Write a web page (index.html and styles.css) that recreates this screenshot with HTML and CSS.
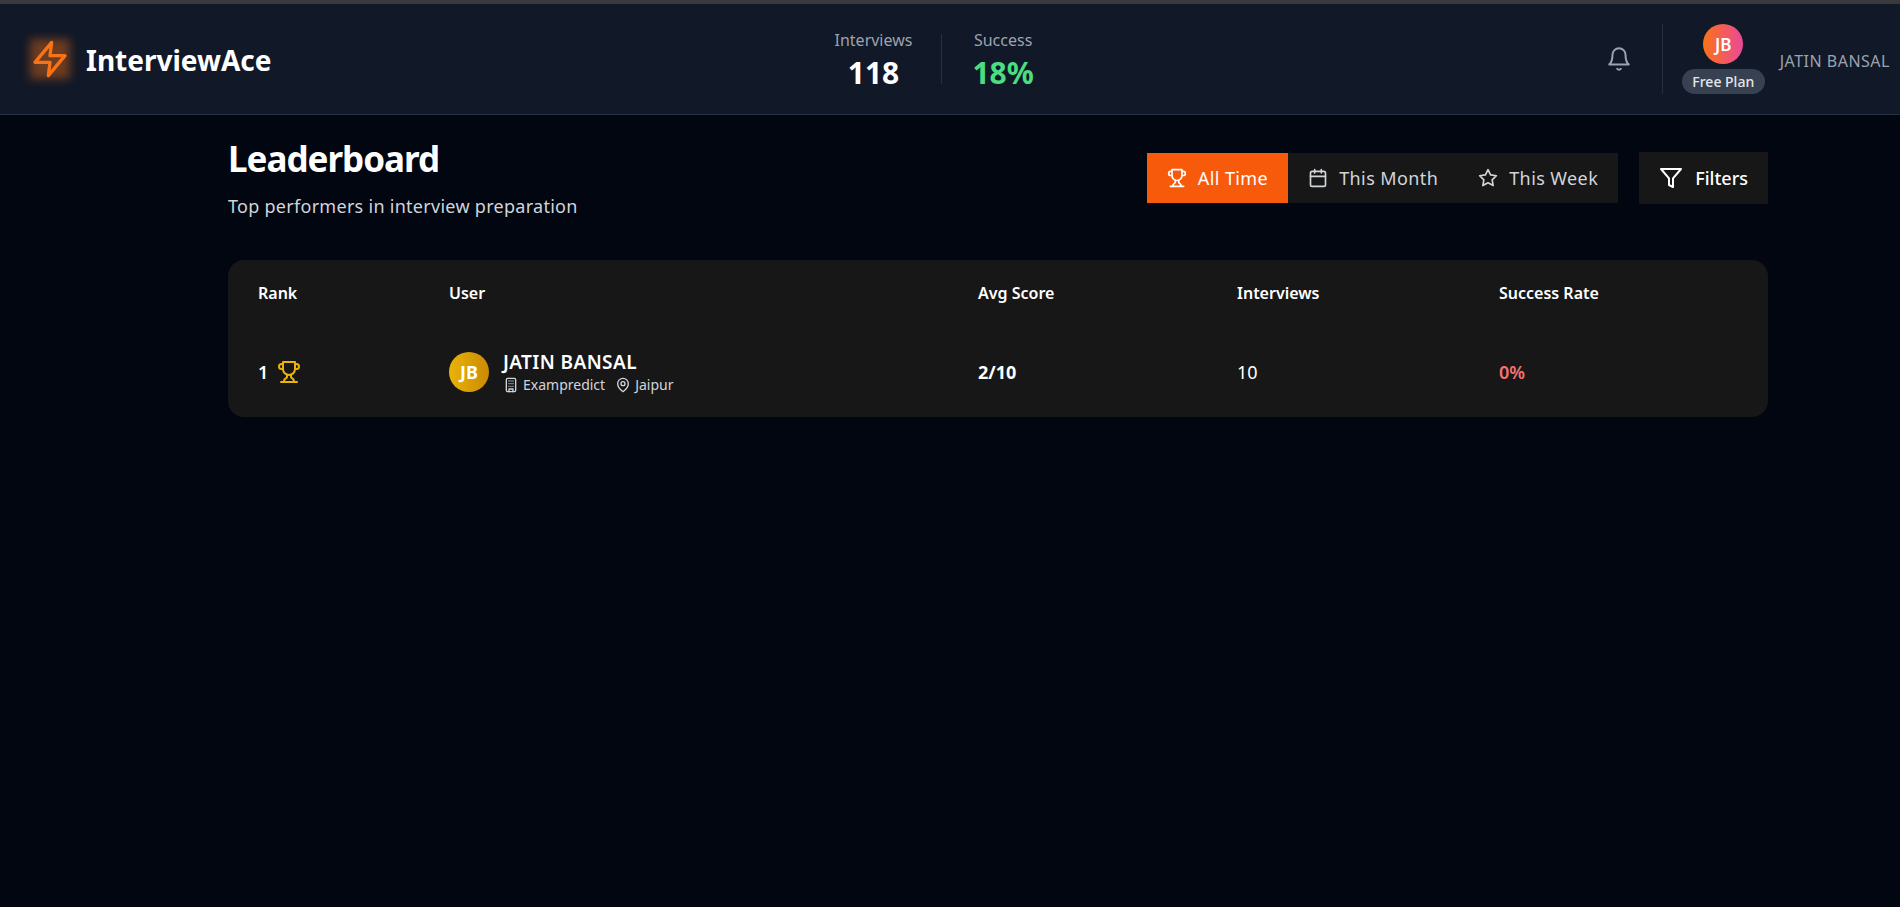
FILE: index.html
```html
<!DOCTYPE html>
<html lang="en">
<head>
<meta charset="utf-8">
<title>Leaderboard</title>
<link rel="stylesheet" href="styles.css">
</head>
<body>
<div class="strip"></div>
<header class="nav">
  <div class="brand">
    <span class="bolt"><svg viewBox="0 0 24 24" width="40" height="40" fill="none" stroke="#f97316" stroke-width="2" stroke-linecap="round" stroke-linejoin="round"><path d="M13 2 3 14h9l-1 8 10-12h-9l1-8z"/></svg></span>
    <span class="brand-name">InterviewAce</span>
  </div>
  <div class="stats">
    <div class="stat"><span class="stat-label">Interviews</span><span class="stat-value">118</span></div>
    <span class="stat-divider"></span>
    <div class="stat"><span class="stat-label">Success</span><span class="stat-value green">18%</span></div>
  </div>
  <div class="account">
    <span class="bell"><svg viewBox="0 0 24 24" width="26" height="26" fill="none" stroke="#9ca3af" stroke-width="1.8" stroke-linecap="round" stroke-linejoin="round"><path d="M6 8a6 6 0 0 1 12 0c0 7 3 9 3 9H3s3-2 3-9"/><path d="M10.3 21a2 2 0 0 0 3.4 0"/></svg></span>
    <div class="profile">
      <span class="avatar">JB</span>
      <span class="plan">Free Plan</span>
    </div>
    <span class="acct-name">JATIN BANSAL</span>
  </div>
</header>
<div class="content">
<main class="page">
  <div class="head">
    <div class="titles">
      <h1>Leaderboard</h1>
      <p>Top performers in interview preparation</p>
    </div>
    <div class="controls">
      <div class="tabs">
        <span class="tab active"><svg viewBox="0 0 24 24" width="20" height="20" class="ic"><path d="M6 9H4.5a2.5 2.5 0 0 1 0-5H6"/><path d="M18 9h1.5a2.5 2.5 0 0 0 0-5H18"/><path d="M4 22h16"/><path d="M10 14.66V17c0 .55-.47.98-.97 1.21C7.85 18.75 7 20.24 7 22"/><path d="M14 14.66V17c0 .55.47.98.97 1.21C16.15 18.75 17 20.24 17 22"/><path d="M18 2H6v7a6 6 0 0 0 12 0V2z"/></svg>All Time</span>
        <span class="tab"><svg viewBox="0 0 24 24" width="20" height="20" class="ic"><rect x="3" y="4" width="18" height="18" rx="2"/><path d="M16 2v4M8 2v4M3 10h18"/></svg>This Month</span>
        <span class="tab"><svg viewBox="0 0 24 24" width="20" height="20" class="ic"><path d="M12 2l3.09 6.26L22 9.27l-5 4.87 1.18 6.88L12 17.77l-6.18 3.25L7 14.14 2 9.27l6.91-1.01L12 2z"/></svg>This Week</span>
      </div>
      <span class="filter"><svg viewBox="0 0 24 24" width="24" height="24" class="ic"><path d="M22 3H2l8 9.46V19l4 2v-8.54L22 3z"/></svg>Filters</span>
    </div>
  </div>
  <section class="board">
    <div class="row row-head">
      <span>Rank</span><span>User</span><span>Avg Score</span><span>Interviews</span><span>Success Rate</span>
    </div>
    <div class="row row-body">
      <span class="rank">1 <svg viewBox="0 0 24 24" width="24" height="24" fill="none" stroke="#eab308" stroke-width="2" stroke-linecap="round" stroke-linejoin="round"><path d="M6 9H4.5a2.5 2.5 0 0 1 0-5H6"/><path d="M18 9h1.5a2.5 2.5 0 0 0 0-5H18"/><path d="M4 22h16"/><path d="M10 14.66V17c0 .55-.47.98-.97 1.21C7.85 18.75 7 20.24 7 22"/><path d="M14 14.66V17c0 .55.47.98.97 1.21C16.15 18.75 17 20.24 17 22"/><path d="M18 2H6v7a6 6 0 0 0 12 0V2z"/></svg></span>
      <div class="user">
        <span class="user-avatar">JB</span>
        <div class="user-info">
          <span class="user-name">JATIN BANSAL</span>
          <span class="user-meta">
            <svg viewBox="0 0 24 24" width="16" height="16" class="ic2"><rect x="5" y="2" width="14" height="20" rx="2"/><path d="M9 22v-4h6v4M9 6h.01M12 6h.01M15 6h.01M9 10h.01M12 10h.01M15 10h.01M9 14h.01M12 14h.01M15 14h.01"/></svg>
            <span class="org">Exampredict</span>
            <svg viewBox="0 0 24 24" width="16" height="16" class="ic2"><path d="M20 10c0 6-8 12-8 12s-8-6-8-12a8 8 0 0 1 16 0z"/><circle cx="12" cy="10" r="3"/></svg>
            <span>Jaipur</span>
          </span>
        </div>
      </div>
      <span class="score">2/10</span>
      <span class="count">10</span>
      <span class="rate">0%</span>
    </div>
  </section>
</main>
</div>
</body>
</html>
```

FILE: styles.css
```css
* { box-sizing: border-box; }
html, body { margin: 0; height: 100%; }
body {
  background: #010611;
  color: #fff;
  font-family: "Noto Sans", "Open Sans", sans-serif;
  overflow: hidden;
}
.strip { height: 4px; background: #3a3a3c; }
.nav {
  height: 111px;
  background: #111827;
  border-bottom: 1px solid #263040;
  display: flex;
  align-items: center;
  justify-content: space-between;
  padding: 0 10px 0 30px;
}
.brand { display: flex; align-items: center; gap: 16px; }
.bolt {
  position: relative;
  display: flex;
  width: 40px;
  height: 40px;
}
.bolt::before {
  content: "";
  position: absolute;
  inset: 0;
  background: rgba(249, 115, 22, 0.4);
  filter: blur(5px);
}
.bolt svg { position: relative; }
.brand-name { font-size: 28px; font-weight: 700; line-height: 36px; margin-top: 2px; }
.stats { display: flex; align-items: center; }
.stat { display: flex; flex-direction: column; align-items: center; gap: 3px; }
.stat-divider { width: 1px; height: 50px; margin: 0 30px 0 29px; background: #263040; }
.stat-label { font-size: 16px; line-height: 24px; color: #9ca3af; }
.stat-value { font-size: 30px; font-weight: 700; line-height: 36px; }
.green { color: #4ade80; }
.account { display: flex; align-items: center; }
.bell { display: flex; width: 44px; justify-content: center; }
.profile {
  display: flex;
  flex-direction: column;
  align-items: center;
  gap: 5px;
  margin-left: 21px;
  padding-left: 19px;
  border-left: 1px solid #263040;
}
.avatar {
  width: 40px;
  height: 40px;
  border-radius: 50%;
  background: linear-gradient(90deg, #f97316, #ec4899);
  display: flex;
  align-items: center;
  justify-content: center;
  font-size: 17px;
  font-weight: 600;
}
.plan {
  height: 25px;
  padding: 0 10.5px;
  border-radius: 13px;
  background: #374151;
  color: #e5e7eb;
  font-size: 14px;
  font-weight: 500;
  line-height: 25px;
}
.acct-name { margin-left: 15px; padding-top: 3px; font-size: 16px; letter-spacing: 0.5px; color: #9ca3af; }
.content { padding-left: 96px; }
.page { width: 1540px; margin: 0 auto; padding-top: 22px; }
.head { display: flex; justify-content: space-between; }
h1 { margin: 0; font-size: 35px; line-height: 44px; font-weight: 700; letter-spacing: -1px; }
.titles p { margin: 13px 0 0; font-size: 18px; line-height: 24px; letter-spacing: 0.28px; color: #d1d5db; }
.controls { display: flex; align-items: flex-start; gap: 21px; padding-top: 16px; }
.tabs { display: flex; height: 50px; background: #171717; }
.tab {
  display: flex;
  align-items: center;
  gap: 11px;
  padding: 0 20px;
  font-size: 18px;
  letter-spacing: 0.4px;
  color: #d1d5db;
}
.tab.active { background: #f85a0b; color: #fff; }
.ic { fill: none; stroke: currentColor; stroke-width: 2; stroke-linecap: round; stroke-linejoin: round; }
.ic2 { fill: none; stroke: currentColor; stroke-width: 2; stroke-linecap: round; stroke-linejoin: round; color: #d1d5db; }
.filter {
  display: flex;
  align-items: center;
  gap: 12px;
  height: 52px;
  margin-top: -1px;
  padding: 0 20px;
  background: #171717;
  font-size: 18px;
  font-weight: 500;
}
.board { margin-top: 42px; background: #171717; border-radius: 16px; height: 157px; }
.row {
  display: grid;
  grid-template-columns: 191px 529px 259px 262px 1fr;
  align-items: center;
  padding-left: 30px;
}
.row-head { height: 66px; font-size: 16px; font-weight: 600; }
.row-body { height: 91px; font-size: 18px; }
.rank { display: flex; align-items: center; gap: 9px; font-weight: 600; }
.user { display: flex; align-items: center; gap: 14px; }
.user-avatar {
  width: 40px;
  height: 40px;
  border-radius: 50%;
  background: linear-gradient(90deg, #eab308, #ca8a04);
  display: flex;
  align-items: center;
  justify-content: center;
  font-size: 18px;
  font-weight: 700;
}
.user-info { display: flex; flex-direction: column; }
.user-name { font-size: 19px; font-weight: 600; line-height: 26px; letter-spacing: 0.4px; }
.user-meta { display: flex; align-items: center; gap: 4px; font-size: 14px; line-height: 20px; color: #d1d5db; }
.org { margin-right: 6px; }
.score { font-weight: 700; }
.rate { color: #f87171; font-weight: 600; }
```
